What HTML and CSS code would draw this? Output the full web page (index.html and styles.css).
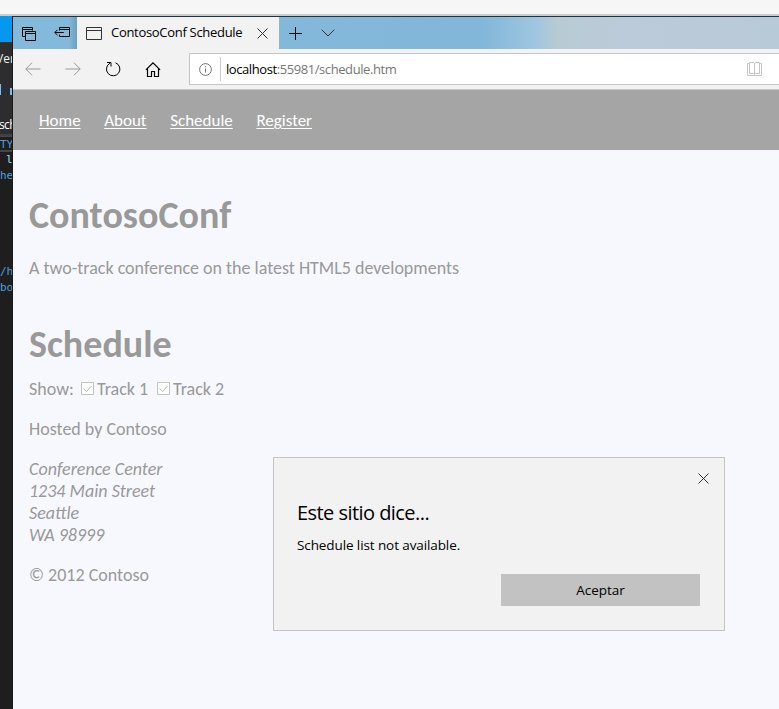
FILE: index.html
```html
<!DOCTYPE html>
<html lang="es">
<head>
<meta charset="utf-8">
<title>ContosoConf Schedule</title>
<link rel="stylesheet" href="styles.css">
</head>
<body>
<div class="top-strip"></div>
<div class="desktop">
  <aside class="editor">
    <div class="editor-title"></div>
    <div class="editor-menu"><span>Ver</span></div>
    <div class="editor-tools"><i></i><i class="short"></i></div>
    <div class="editor-tab"><span>sch</span></div>
    <div class="code">
      <span class="line current">TY</span>
      <span class="line lang">l</span>
      <span class="line">he</span>
      <span class="line closing">/h</span>
      <span class="line">bo</span>
    </div>
  </aside>
  <div class="browser">
    <div class="tabs">
      <div class="tab-tools">
        <svg class="stack" width="16" height="14" viewBox="0 0 16 14"><path d="M3 9.500H.5V.5h10v3M.5 2.500h10M3.500 4.500h10v9h-10zM3.500 6.500h10" class="ink"/></svg>
        <svg width="16" height="12" viewBox="0 0 16 12"><path d="M5.500 3.500v-3h10v9h-10v-2M5.500 2.500h10M.8 5.500h9M3.500 2.800L.8 5.500l2.700 2.700" class="ink"/></svg>
      </div>
      <div class="tab">
        <svg width="16" height="13" viewBox="0 0 16 13"><path d="M.5.500h15v12H.5zM.5 3.500h15" class="ink soft"/></svg>
        <span class="tab-title">ContosoConf Schedule</span>
        <svg class="tab-close" width="11" height="11" viewBox="0 0 11 11"><path d="M.5.500l10 10M10.500.500l-10 10" class="ink soft"/></svg>
      </div>
      <svg class="plus" width="13" height="13" viewBox="0 0 13 13"><path d="M6.500 0v13M0 6.500h13" class="ink"/></svg>
      <svg class="chevron" width="14" height="8" viewBox="0 0 14 8"><path d="M.7.700L7 7 13.300.700" class="ink soft"/></svg>
    </div>
    <div class="toolbar">
      <svg class="back" width="16" height="14" viewBox="0 0 16 14"><path d="M.8 7H15.500M7 .7L.8 7 7 13.300" class="ink faded"/></svg>
      <svg class="forward" width="16" height="14" viewBox="0 0 16 14"><path d="M15.200 7H.5M9 .7L15.200 7 9 13.300" class="ink faded"/></svg>
      <svg class="reload" width="16" height="16" viewBox="0 0 16 16"><path d="M10.500 1.800A6.700 6.700 0 1 1 5 2.200M2 1.500h4v4" class="ink"/></svg>
      <svg class="home" width="16" height="15" viewBox="0 0 16 15"><path d="M.9 7.900L8 .9l7.100 7M2.500 6.500v8h4v-5h3v5h4v-8" class="ink thick"/></svg>
      <div class="address">
        <svg width="13" height="13" viewBox="0 0 13 13"><circle cx="6.500" cy="6.500" r="5.900" class="ink info"/><path d="M6.500 5.500v4M6.500 3.200v1.200" class="ink info"/></svg>
        <span class="url"><b>localhost</b>:55981/schedule.htm</span>
        <svg class="book" width="15" height="14" viewBox="0 0 15 14"><path d="M2.500.500h4l1 1 1-1h4v11h-4l-1 1-1-1h-4zM7.500 1.500v11M2.500 1.500h-2v12h14v-12h-2" class="ink pale"/></svg>
      </div>
    </div>
    <div class="page">
      <nav>
        <a href="#">Home</a><a href="#">About</a><a href="#">Schedule</a><a href="#">Register</a>
      </nav>
      <main>
        <h1>ContosoConf</h1>
        <p class="tagline">A two-track conference on the latest HTML5 developments</p>
        <h1 class="section">Schedule</h1>
        <div class="filters">
          <span class="show">Show:</span>
          <label><svg width="13" height="13" viewBox="0 0 13 13"><path class="box" d="M.5.500h12v12H.5z"/><path class="tick" d="M2.500 6.500l3 3 5-5.500"/></svg><span>Track 1</span></label>
          <label><svg width="13" height="13" viewBox="0 0 13 13"><path class="box" d="M.5.500h12v12H.5z"/><path class="tick" d="M2.500 6.500l3 3 5-5.500"/></svg><span>Track 2</span></label>
        </div>
        <p class="host">Hosted by Contoso</p>
        <address>Conference Center<br>1234 Main Street<br>Seattle<br>WA 98999</address>
        <p class="copyright">© 2012 Contoso</p>
      </main>
    </div>
  </div>
</div>
<div class="dialog" role="dialog">
  <svg class="dismiss" width="11" height="11" viewBox="0 0 11 11"><path d="M.5.500l10 10M10.500.500l-10 10" class="ink soft"/></svg>
  <h2>Este sitio dice...</h2>
  <p>Schedule list not available.</p>
  <button type="button">Aceptar</button>
</div>
</body>
</html>
```
FILE: styles.css
```css
* { box-sizing: border-box; }
body { margin: 0; height: 709px; overflow: hidden; font-family: "Open Sans", "Noto Sans", sans-serif; background: #f7f8fd; }
svg { display: block; flex: none; overflow: visible; }
h1, h2, p { margin: 0; font-weight: normal; }
.ink { fill: none; stroke: #000; stroke-width: 1; }
.soft { stroke: #333; }
.faded { stroke: #999; }
.thick { stroke-width: 1.2; }
.info { stroke: #777; }
.pale { stroke: #c4c4c4; }

.top-strip { height: 16px; background: #f6f6f6; border-bottom: 2px solid #ccc; }
.desktop { display: flex; height: 693px; }

.editor { width: 13px; overflow: hidden; background: #1e1e1e; font-size: 12px; white-space: nowrap; border-right: 1px solid #191919; }
.editor-title { height: 26px; background: #0499ee; }
.editor-menu { height: 36px; background: #2d2d30; color: #f1f1f1; line-height: 34px; }
.editor-menu span { margin-left: -4px; }
.editor-tools { height: 37px; display: flex; gap: 9px; padding-top: 6px; background: #2d2d30; }
.editor-tools i { width: 1px; height: 11px; background: #75beff; }
.editor-tools .short { width: 2px; height: 7px; margin-top: 4px; }
.editor-tab { height: 21px; background: #2d2d30; color: #fff; line-height: 20px; border-bottom: 2px solid #3f3f46; letter-spacing: -0.6px; }
.editor-tab span { margin-left: -1px; }
.code { font-family: "DejaVu Sans Mono", monospace; font-size: 11px; color: #569cd6; }
.line { display: block; height: 16px; line-height: 16px; }
.current { border-bottom: 2px solid #464646; border-top: 1px solid #464646; line-height: 15px; }
.lang { padding-left: 6px; color: #9cdcfe; }
.closing { margin-top: 80px; }

.browser { flex: 1; min-width: 0; border-top: 1px solid #1e3442; }
.tabs { display: flex; align-items: center; height: 32px; background: linear-gradient(to right, #83b9da 0, #82b7da 470px, #9fc6e0 522px, #b8cbd4 545px, #bccbda 620px, #b8c9d8 100%); }
.tab-tools { width: 64px; height: 32px; display: flex; align-items: center; gap: 16px; padding-left: 9px; background: linear-gradient(to right, transparent 56px, #6b9fbd); }
.stack { margin-top: 1px; }
.tab { width: 202px; height: 33px; margin-bottom: -1px; display: flex; align-items: center; padding-left: 9px; background: #f2f2f2; }
.tab-title { width: 131px; margin: -3px 0 0 9px; font-size: 13px; letter-spacing: -0.3px; white-space: nowrap; }
.tab-close { margin-left: 15px; }
.plus { margin-left: 10px; }
.chevron { margin-left: 19px; }
.toolbar { display: flex; align-items: center; height: 41px; padding-left: 12px; background: #f2f2f2; border-bottom: 1px solid #c8c8c8; }
.forward, .reload, .home { margin-left: 24px; }
.address { flex: 1; height: 32px; margin-left: 28px; display: flex; align-items: center; padding-left: 9px; background: #fff; border: 1px solid #c6c6c6; border-right: 0; }
.url { flex: 1; height: 24px; line-height: 24px; margin-left: 8px; padding-left: 5px; border-left: 1px solid #ccc; font-size: 13px; letter-spacing: -0.42px; color: #777; white-space: nowrap; }
.url b { font-weight: normal; color: #000; }
.book { margin-right: 17px; }

.page { font-family: Carlito, Lato, sans-serif; font-size: 18px; line-height: 22px; color: #999; }
nav { display: flex; height: 60px; align-items: center; gap: 23.6px; padding: 1px 0 0 26px; font-size: 17px; background: #a5a5a5; }
nav a { color: #fff; text-decoration: underline; text-underline-offset: 2px; text-decoration-thickness: 1px; }
main { padding: 43px 16px 0; white-space: nowrap; }
h1 { font-size: 38px; line-height: 44px; font-weight: bold; }
.tagline { margin-top: 20px; }
.section { margin-top: 43px; }
.filters { display: flex; align-items: center; margin-top: 12px; }
.show { width: 52px; }
label { display: flex; align-items: center; gap: 3px; width: 76px; }
label svg { margin-top: -1px; }
.box { fill: #fff; stroke: #c2c2c2; }
.tick { fill: none; stroke: #bbb; }
.host, address, .copyright { margin-top: 18px; }

.dialog { position: absolute; left: 273px; top: 457px; width: 452px; height: 174px; padding: 15px 24px 0 23px; display: flex; flex-direction: column; background: #f2f2f2; border: 1px solid #c3c3c8; color: #000; }
.dismiss { align-self: flex-end; margin-right: -9px; }
.dialog h2 { margin-top: 14px; font-size: 20px; line-height: 30px; letter-spacing: -0.55px; }
.dialog p { margin-top: 7px; font-size: 13.5px; line-height: 20px; letter-spacing: -0.1px; }
.dialog button { align-self: flex-end; width: 199px; height: 32px; margin-top: 19px; padding: 0; border: 0; background: #c2c2c2; color: #000; font: 13.5px "Open Sans", sans-serif; }
```
